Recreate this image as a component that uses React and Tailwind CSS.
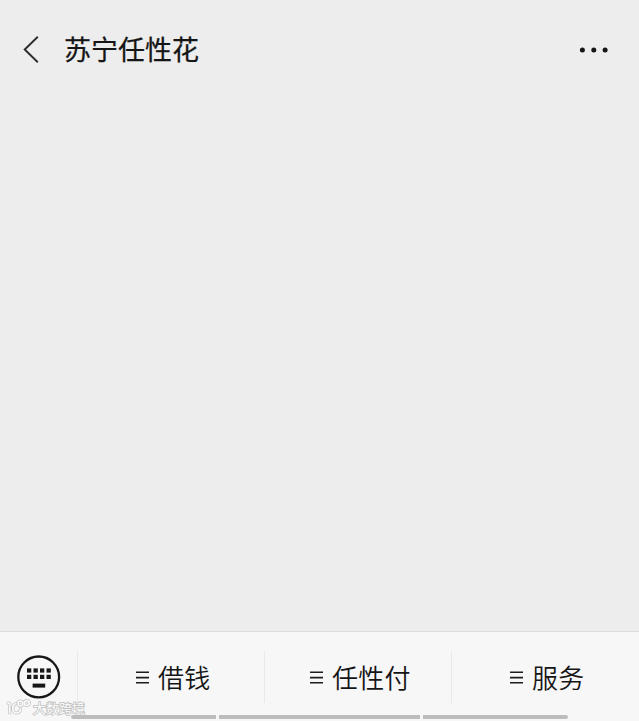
const MENUS = [
  { label: '借钱', pad: 'pl-[58px]' },
  { label: '任性付', pad: 'pl-[45px]' },
  { label: '服务', pad: 'pl-[58px]' },
]

function BackIcon() {
  return (
    <svg width="16" height="28" viewBox="0 0 16 28" fill="none" stroke="#2b2b2b" strokeWidth="1.9">
      <path d="M14.8.7 1.7 13.5l13.1 12.8" />
    </svg>
  )
}

function MoreIcon() {
  return (
    <svg width="30" height="6" viewBox="0 0 30 6" fill="#161616">
      <circle cx="3.4" cy="3" r="2.5" />
      <circle cx="14.8" cy="3" r="2.5" />
      <circle cx="26.1" cy="3" r="2.5" />
    </svg>
  )
}

function KeyboardIcon() {
  return (
    <svg width="44" height="44" viewBox="0 0 44 44" fill="#171717">
      <circle cx="21.7" cy="21.9" r="20.4" fill="none" stroke="#171717" strokeWidth="2.3" />
      {[13.4, 19.8].map((y) =>
        [10, 16.5, 23, 29.5].map((x) => <rect key={`${x}-${y}`} x={x} y={y} width="4.3" height="4.2" />)
      )}
      <rect x="15.6" y="28.6" width="12.6" height="4" />
    </svg>
  )
}

function MenuIcon() {
  return (
    <svg width="13" height="13" viewBox="0 0 13 13" stroke="#1c1c1c" strokeWidth="1.6">
      <path d="M0 1.3h13M0 6.6h13M0 11.7h13" />
    </svg>
  )
}

function Watermark() {
  return (
    <div className="absolute left-[6px] top-[698px] flex items-center">
      <svg width="26" height="19" viewBox="0 0 26 19" fill="none" strokeLinecap="round" strokeLinejoin="round">
        {[
          ['#c4c4c4', 3.2],
          ['#fafafa', 1.7],
        ].map(([color, width]) => (
          <g key={color} stroke={color} strokeWidth={width}>
            <path d="M2.2 5.2h1.5v9.6M9.6 5.6C7.4 6.8 6.6 9 6.8 11.2c.2 2.4 1.9 4 4.2 3.8 2.2-.2 3.5-1.8 3.5-4.2" />
            <circle cx="14.4" cy="5.4" r="2.4" />
            <circle cx="20.8" cy="5.1" r="2.4" />
          </g>
        ))}
      </svg>
      <span className="ml-px text-[13px] leading-[19px] text-[#fcfcfc] [-webkit-text-stroke:1.5px_#c0c0c0] [paint-order:stroke_fill]">
        大数跨境
      </span>
    </div>
  )
}

export default function App() {
  return (
    <div className="relative flex h-[721px] w-[639px] flex-col overflow-hidden bg-[#ededed] font-['Noto_Sans_CJK_SC',sans-serif] text-[#151515]">
      <header className="flex h-[99px] items-center pr-[30px] pl-[23px]">
        <BackIcon />
        <h1 className="ml-[25px] flex-1 pb-[2px] text-[27px] leading-[40px] font-normal [-webkit-text-stroke:0.25px_#151515]">
          苏宁任性花
        </h1>
        <MoreIcon />
      </header>

      <main className="flex-1" />

      <footer className="flex h-[90px] flex-col border-t border-[#dcdcdc] bg-[#f7f7f7]">
        <div className="flex h-[83px] pt-[19px]">
          <div className="flex w-[77px] justify-center pt-[4px]">
            <KeyboardIcon />
          </div>
          <div className="grid flex-1 grid-cols-[187px_187px_188px]">
            {MENUS.map(({ label, pad }) => (
              <div key={label} className={`flex h-[52px] items-center border-l border-[#e9e9e9] ${pad}`}>
                <MenuIcon />
                <span className="ml-[9px] text-[26px] leading-[38px] font-[350] tracking-[0.3px]">{label}</span>
              </div>
            ))}
          </div>
        </div>
        <div className="flex h-1 gap-[3px] pl-[71px]">
          <div className="w-[145px] rounded-l-full bg-[#bdbdbd]" />
          <div className="w-[201px] bg-[#bdbdbd]" />
          <div className="w-[145px] rounded-r-full bg-[#bdbdbd]" />
        </div>
      </footer>

      <Watermark />
    </div>
  )
}
